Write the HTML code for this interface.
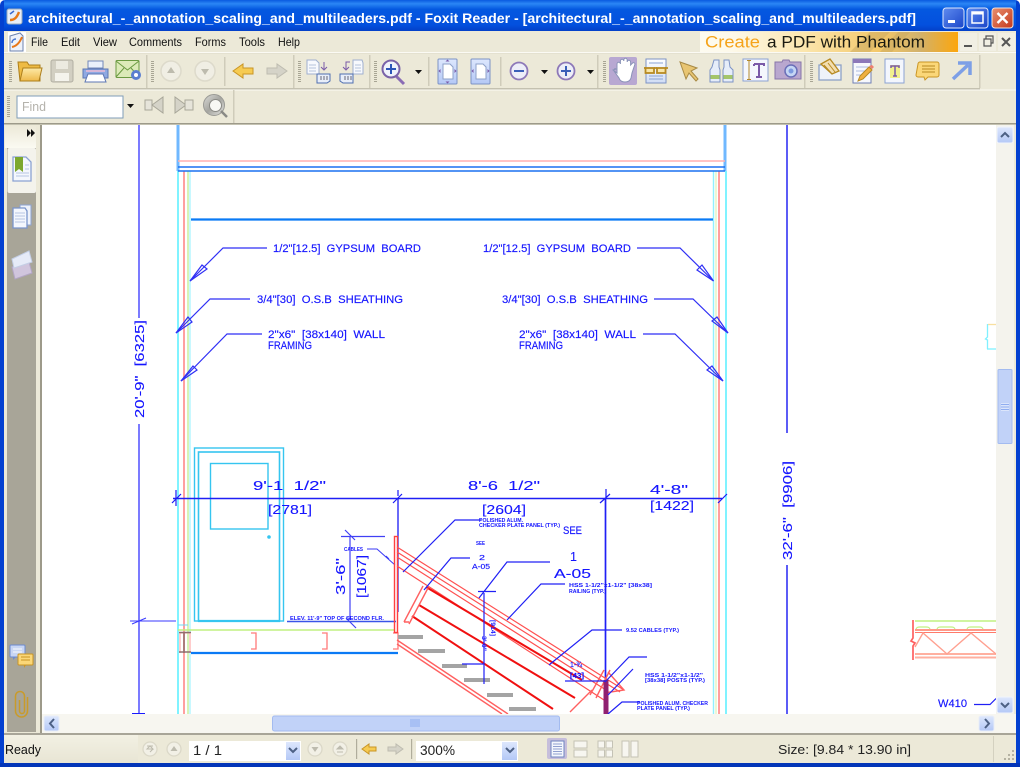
<!DOCTYPE html>
<html><head><meta charset="utf-8"><title>Foxit Reader</title>
<style>
html,body{margin:0;padding:0;background:#ece9d8;width:1020px;height:767px;overflow:hidden}
svg.root{display:block;position:absolute;left:0;top:0;filter:blur(.3px)}
text{font-family:"Liberation Sans",sans-serif}
.ui{font-size:12px;fill:#111}
.cad{fill:#1414ff;font-size:11px;stroke:#1414ff;stroke-width:.15}
.cd{fill:#1414ff;font-size:12.5px;stroke:#1414ff;stroke-width:.1}
.t{fill:#1414ff;font-size:5px;font-weight:bold}
</style></head><body>
<svg class="root" width="1020" height="767" viewBox="0 0 1020 767" xmlns="http://www.w3.org/2000/svg">
<defs>
<linearGradient id="tb" x1="0" y1="0" x2="0" y2="1"><stop offset="0" stop-color="#0a5ae0"/><stop offset=".12" stop-color="#2b86f5"/><stop offset=".3" stop-color="#0458e0"/><stop offset=".8" stop-color="#0350de"/><stop offset="1" stop-color="#0340c8"/></linearGradient>
<linearGradient id="bn" x1="0" y1="0" x2="1" y2="0"><stop offset="0" stop-color="#fdfbf0"/><stop offset=".12" stop-color="#fdf9ea"/><stop offset=".4" stop-color="#fbe6ae"/><stop offset=".7" stop-color="#f3c768"/><stop offset=".85" stop-color="#d2b26c"/><stop offset="1" stop-color="#fca60c"/></linearGradient>
<linearGradient id="min" x1="0" y1="0" x2="1" y2="1"><stop offset="0" stop-color="#5f8cf0"/><stop offset="1" stop-color="#1a45c8"/></linearGradient>
<linearGradient id="cls" x1="0" y1="0" x2="1" y2="1"><stop offset="0" stop-color="#e9906f"/><stop offset="1" stop-color="#c4381c"/></linearGradient>
<linearGradient id="bt" x1="0" y1="0" x2="0" y2="1"><stop offset="0" stop-color="#dde7fd"/><stop offset="1" stop-color="#b4c8f6"/></linearGradient>
<linearGradient id="side" x1="0" y1="0" x2="0" y2="1"><stop offset="0" stop-color="#ece9d8"/><stop offset="1" stop-color="#fbfaf2"/></linearGradient>
<linearGradient id="st" x1="0" y1="0" x2="0" y2="1"><stop offset="0" stop-color="#f2f0e3"/><stop offset="1" stop-color="#e8e5d4"/></linearGradient>
<linearGradient id="fold" x1="0" y1="0" x2="0" y2="1"><stop offset="0" stop-color="#fdeaa8"/><stop offset="1" stop-color="#eeb94a"/></linearGradient>
<linearGradient id="pg" x1="0" y1="0" x2="0" y2="1"><stop offset="0" stop-color="#fff"/><stop offset="1" stop-color="#cfdcf5"/></linearGradient>
<linearGradient id="ring" x1="0" y1="0" x2="1" y2="1"><stop offset="0" stop-color="#dcdcd8"/><stop offset=".5" stop-color="#a5a5a0"/><stop offset="1" stop-color="#e6e6e2"/></linearGradient>
</defs>

<!-- frame -->
<rect width="1020" height="767" fill="#ece9d8"/>
<rect width="1020" height="31" fill="url(#tb)"/>
<rect x="0" y="0" width="4" height="767" fill="#0340d0"/>
<rect x="1016" y="0" width="4" height="767" fill="#0340d0"/>
<rect x="0" y="763" width="1020" height="4" fill="#0335b8"/>
<path d="M0 0h5a5 5 0 0 0-5 5zM1020 0h-5a5 5 0 0 1 5 5z" fill="#fff"/>

<!-- title -->
<g><rect x="7" y="9" width="15" height="15" rx="2" fill="#e8eef8" stroke="#9ab"/><path d="M10 20c5 0 7-3 9-8" stroke="#e87a18" stroke-width="2.4" fill="none"/><path d="M10 14l4-3" stroke="#3a6bd0" stroke-width="1.5"/></g>
<text x="28" y="23" font-size="13.5" font-weight="bold" fill="#fff" textLength="888" lengthAdjust="spacingAndGlyphs">architectural_-_annotation_scaling_and_multileaders.pdf - Foxit Reader - [architectural_-_annotation_scaling_and_multileaders.pdf]</text>
<!-- window buttons -->
<rect x="943" y="8" width="21" height="20" rx="3" fill="url(#min)" stroke="#dfe8fb"/><rect x="948" y="20" width="7" height="3" fill="#fff"/>
<rect x="967" y="8" width="21" height="20" rx="3" fill="url(#min)" stroke="#dfe8fb"/><rect x="972" y="12" width="11" height="11" fill="none" stroke="#fff" stroke-width="1.5"/><rect x="972" y="12" width="11" height="2.5" fill="#fff"/>
<rect x="992" y="8" width="21" height="20" rx="3" fill="url(#cls)" stroke="#f2e3dc"/><path d="M997.500 13l10 10M1007.500 13l-10 10" stroke="#fff" stroke-width="2.400"/>

<!-- menu -->
<g><rect x="8" y="32" width="18" height="20" fill="#fff"/><path d="M10 36l10-3 3 3v15H10z" fill="#eef2fa" stroke="#6d83ad"/><path d="M12 47c5-1 8-5 10-10" stroke="#e8781a" stroke-width="2" fill="none"/><path d="M12 43c0-3 2-4 4-4" stroke="#4a78d0" stroke-width="1.400" fill="none"/></g>
<text class="ui" x="31" y="46" textLength="17" lengthAdjust="spacingAndGlyphs">File</text>
<text class="ui" x="61" y="46" textLength="19" lengthAdjust="spacingAndGlyphs">Edit</text>
<text class="ui" x="93" y="46" textLength="24" lengthAdjust="spacingAndGlyphs">View</text>
<text class="ui" x="129" y="46" textLength="53" lengthAdjust="spacingAndGlyphs">Comments</text>
<text class="ui" x="195" y="46" textLength="31" lengthAdjust="spacingAndGlyphs">Forms</text>
<text class="ui" x="239" y="46" textLength="26" lengthAdjust="spacingAndGlyphs">Tools</text>
<text class="ui" x="278" y="46" textLength="22" lengthAdjust="spacingAndGlyphs">Help</text>
<rect x="700" y="32" width="258" height="20" fill="url(#bn)"/>
<path d="M850 52l20-20h20l-20 20zM880 52l18-20h12l-18 20z" fill="#c8a860" opacity=".5"/>
<text x="705" y="47.500" font-size="16.500" fill="#f5a31a" textLength="55" lengthAdjust="spacingAndGlyphs">Create</text>
<text x="767" y="47.500" font-size="16.500" fill="#1a1a10" textLength="158" lengthAdjust="spacingAndGlyphs">a PDF with Phantom</text>
<rect x="960" y="33" width="17" height="18" fill="#f1efe4"/><rect x="964" y="45" width="8" height="2" fill="#555"/>
<rect x="979" y="33" width="17" height="18" fill="#f1efe4"/><path d="M984 39h7v7h-7zM986 39v-3h7v7h-2" fill="none" stroke="#555" stroke-width="1.200"/>
<rect x="998" y="33" width="17" height="18" fill="#f1efe4"/><path d="M1002 38l8 8M1010 38l-8 8" stroke="#555" stroke-width="2"/>
<rect x="4" y="52" width="1012" height="1" fill="#fbfaf4"/>

<!-- toolbar 1 lines -->
<rect x="4" y="53" width="976" height="1" fill="#e4e1d0"/>
<rect x="4" y="88" width="976" height="1.500" fill="#c4c1b0"/>
<rect x="4" y="89.500" width="1012" height="1" fill="#fbfaf4"/>
<g fill="#cfccba">
<rect x="146" y="55" width="1.500" height="33"/><rect x="224" y="57" width="1.500" height="29"/><rect x="293" y="55" width="1.500" height="33"/><rect x="369" y="55" width="1.500" height="33"/><rect x="428" y="57" width="1.500" height="29"/><rect x="500" y="57" width="1.500" height="29"/><rect x="597" y="55" width="1.500" height="33"/><rect x="804" y="55" width="1.500" height="33"/><rect x="979" y="55" width="1.500" height="33"/>
<rect x="233" y="90" width="1.500" height="33"/>
</g>
<!-- grippers -->
<g stroke="#a8a594" stroke-width="3" stroke-dasharray="1 1"><path d="M10.500 61v21M152.500 61v21M299.500 61v21M375.500 61v21M604.500 61v21M811.500 61v21M8.500 96v22"/></g>

<!-- folder -->
<path d="M18 62h9l2 3h11v16H20z" fill="#eebb44" stroke="#ad7f1c"/><path d="M20 81l3-13h19l-3 13z" fill="url(#fold)" stroke="#ad7f1c"/>
<!-- save -->
<rect x="51" y="60" width="22" height="22" rx="2" fill="#d2cfc2" stroke="#b2afa3"/><rect x="56" y="61" width="12" height="8" fill="#eceae0"/><rect x="55" y="73" width="14" height="8" fill="#f4f3ec"/>
<!-- print -->
<path d="M88 61h15v7H88z" fill="#eaf0fb" stroke="#7288b8"/><path d="M83 69h25v9H83z" fill="#8fa9e2" stroke="#5d76b4"/><path d="M88 74h15l3 8H85z" fill="#fff" stroke="#5d76b4"/><rect x="86" y="70" width="19" height="2" fill="#d7b7d8"/>
<!-- mail -->
<rect x="116" y="60.500" width="23" height="17" rx="1" fill="#dceab8" stroke="#6b9a42"/><path d="M116 61l11.500 9 11.500-9M116 77l8-9M139 77l-8-9" fill="none" stroke="#6b9a42"/><circle cx="136" cy="75" r="5" fill="#5b7fd0"/><circle cx="136" cy="75" r="2" fill="#fff"/>
<!-- nav circles -->
<g fill="#f0eee4" stroke="#dddacb" stroke-width="1.500"><circle cx="171" cy="71" r="10"/><circle cx="205" cy="71" r="10"/></g>
<path d="M171 67l4 6h-8z" fill="#bdbbae"/><path d="M205 75l4-6h-8z" fill="#bdbbae"/>
<path d="M233 71l10-7v4h10v6h-10v4z" fill="#f6cb52" stroke="#c99525"/>
<path d="M287 71l-10-7v4h-10v6h10v4z" fill="#d5d3c8" stroke="#bebcb0"/>
<!-- page-move -->
<path d="M307 60h9l3 3v11h-12z" fill="#f7f9fd" stroke="#9fb0cf"/><path d="M309 65h7M309 68h7M309 71h7" stroke="#b5c3dc"/><path d="M317 74h13v7l-3 2h-10z" fill="#e8eef9" stroke="#4f6fb0"/><path d="M321 76v4M324 76v4M327 76v4" stroke="#667"/><path d="M324 62v7M321 67l3 3 3-3" stroke="#7a5aa8" fill="none"/>
<path d="M353 60h9l1 3v11h-10z" fill="#f7f9fd" stroke="#9fb0cf"/><path d="M355 65h6M355 68h6M355 71h6" stroke="#b5c3dc"/><path d="M340 74h13v9h-10l-3-2z" fill="#e8eef9" stroke="#4f6fb0"/><path d="M345 76v4M348 76v4M351 76v4" stroke="#667"/><path d="M350 62h-4v7M343 67l3 3 3-3" stroke="#7a5aa8" fill="none"/>
<!-- zoom -->
<path d="M396 76l8 8" stroke="#8a6cb5" stroke-width="3"/><circle cx="391" cy="69" r="8.500" fill="#f0f2fb" stroke="#7a62a8" stroke-width="2"/><path d="M386 69h10M391 64v10" stroke="#2c55b8" stroke-width="2"/>
<path d="M415 70h7l-3.500 4z" fill="#111"/>
<!-- fit page -->
<rect x="438" y="59" width="19" height="25" rx="1" fill="url(#bt)" stroke="#7d93c5"/><path d="M443 64h7l3 3v12h-10z" fill="#fff" stroke="#8ea1c8"/><path d="M447.500 59.500l-2 2h4zM447.500 83.500l-2-2h4zM438.500 71l2-2v4zM456.500 71l-2-2v4z" fill="#7a5aa8"/>
<rect x="471" y="59" width="19" height="25" rx="1" fill="url(#bt)" stroke="#7d93c5"/><path d="M476 64h7l3 3v12h-10z" fill="#fff" stroke="#8ea1c8"/><path d="M471.500 71l2-2v4zM489.500 71l-2-2v4z" fill="#7a5aa8"/>
<!-- +- -->
<circle cx="519" cy="71" r="8.500" fill="#edeef8" stroke="#8d78b8" stroke-width="1.800"/><path d="M514 71h10" stroke="#3a5fb8" stroke-width="2"/>
<path d="M541 70h7l-3.500 4z" fill="#111"/>
<circle cx="566" cy="71" r="8.500" fill="#edeef8" stroke="#8d78b8" stroke-width="1.800"/><path d="M561 71h10M566 66v10" stroke="#3a5fb8" stroke-width="2"/>
<path d="M587 70h7l-3.500 4z" fill="#111"/>
<!-- hand -->
<rect x="609" y="57" width="28" height="28" rx="2" fill="#b8a8d2"/>
<path d="M613 70l4 3v-9a1.700 1.700 0 0 1 3.400 0v-3a1.700 1.700 0 0 1 3.400 0v-1a1.700 1.700 0 0 1 3.400 0v2a1.700 1.700 0 0 1 3.400 0v3l2-2a1.500 1.500 0 0 1 2.400 1l-3 9-1 5c-1 3-3 4-6 4-3 0-5-1-6-4l-5-7c-.8-1.500 1-3 2-2z" fill="#fff" stroke="#8b93b8"/>
<!-- glasses page -->
<rect x="646" y="59" width="20" height="24" fill="url(#pg)" stroke="#7d93c5"/><path d="M649 76h14M649 79h14M649 63h14" stroke="#8aa3d4"/><rect x="645.500" y="68" width="8.500" height="5" fill="#f8e6a8" stroke="#b78a22" stroke-width="1.800"/><rect x="657" y="68" width="8.500" height="5" fill="#f8e6a8" stroke="#b78a22" stroke-width="1.800"/><path d="M644 68h2M654 68h3M665 68h3" stroke="#b78a22" stroke-width="1.800"/>
<!-- arrow -->
<path d="M680 62l6 17 3-6 7 8 2-2-7-8 6-3z" fill="#e8c572" stroke="#a88a45"/>
<!-- binoculars -->
<path d="M714 60h5v7l1 3v12h-10V70l2-3z" fill="#e6edf9" stroke="#7d93c5"/><path d="M724 60h5l1 7 3 3v12h-10V70l1-3z" fill="#e6edf9" stroke="#7d93c5"/><rect x="710.500" y="75" width="9" height="4" fill="#a4c56a"/><rect x="723.500" y="75" width="9" height="4" fill="#a4c56a"/>
<!-- IT -->
<rect x="743" y="59" width="25" height="22" fill="#f4f7fd" stroke="#8ba2d2"/><path d="M749 61v18M747 60.500h4M747 79.500h4" stroke="#b48a2c"/><path d="M754 64h10v2M759 64v13M756 77h6M754 66v-2" stroke="#7a5aa8" stroke-width="2" fill="none"/>
<!-- camera -->
<path d="M775 62h7l1-2h6l1 2h11v17h-26z" fill="#b9a7cf" stroke="#8875a8"/><circle cx="791" cy="71" r="6" fill="#c5d6f4" stroke="#6a6fb8" stroke-width="1.500"/><circle cx="791" cy="71" r="2.500" fill="#7d9ae0"/>
<!-- note icons -->
<rect x="819" y="65" width="22" height="15" fill="#eef2f9" stroke="#8da2c6" stroke-width="1.300"/><path d="M821 64l9-5 9 12-7 3z" fill="#f3deb0" stroke="#b78a22" stroke-width="1.300"/><path d="M824 65l8 9M828 63l7 9" stroke="#b78a22"/>
<rect x="853" y="59" width="18" height="24" fill="#f7f8fc" stroke="#6f7fb5"/><rect x="853" y="59" width="18" height="4" fill="#8d78b8"/><path d="M856 67h12M856 71h10M856 75h8" stroke="#aebde0"/><path d="M858 81l2-5 9-9 3 3-9 9z" fill="#f0b040" stroke="#b78a22"/><path d="M869 66l3 3 2-2-2-2z" fill="#ef7f70"/>
<rect x="885" y="59" width="19" height="24" fill="#f3f6fd" stroke="#8ba2d2"/><rect x="890" y="65" width="10" height="13" fill="#f2f08e"/><path d="M891 68v-2h8v2M895 66v10M893 76h4" stroke="#7a5aa8" stroke-width="1.500" fill="none"/>
<path d="M918 64a2 2 0 0 1 2-2h17a2 2 0 0 1 2 2v11a2 2 0 0 1-2 2h-9l-3 3-1-3h-6a2 2 0 0 1-2-2z" fill="#fbd778" stroke="#c99525"/><path d="M922 66h13M922 69h13M922 72h13" stroke="#b78a22"/>
<path d="M953 79l15-14M958 63h12v12" fill="none" stroke="#7d9fe6" stroke-width="3.500"/>

<!-- toolbar 2 -->
<rect x="4" y="123" width="1012" height="1.500" fill="#9d9a8a"/>
<rect x="17" y="96" width="106" height="22" fill="#fff" stroke="#7f9db9"/>
<text x="22" y="111" font-size="12.500" fill="#b5b3ac" textLength="24" lengthAdjust="spacingAndGlyphs">Find</text>
<path d="M127 104h7l-3.500 4z" fill="#111"/>
<path d="M145 100h7v10h-7z" fill="#e6e4da" stroke="#a8a699"/><path d="M152 105l11-8v16z" fill="#d5d3c8" stroke="#a8a699"/>
<path d="M186 105l-11-8v16z" fill="#d5d3c8" stroke="#a8a699"/><path d="M185 100h8v10h-8z" fill="#e6e4da" stroke="#a8a699"/>
<circle cx="214" cy="105" r="10.500" fill="url(#ring)" stroke="#9a9a95"/><circle cx="215.500" cy="105.500" r="6" fill="#f8f8f4" stroke="#8a8a85"/><path d="M221 111l6 6" stroke="#8a8a85" stroke-width="2.500"/>

<!-- side panel -->
<rect x="4" y="124.500" width="38" height="610" fill="#ece9d8"/>
<rect x="5" y="125" width="31" height="23" fill="url(#side)"/>
<rect x="7" y="148" width="29" height="584" fill="#a8a598"/>
<rect x="7.500" y="148" width="28.500" height="45" rx="2" fill="#f4f3ec"/>
<rect x="40" y="125" width="2" height="609" fill="#9d9a8a"/>
<path d="M27 129l4 4-4 4zM31 129l4 4-4 4z" fill="#111"/>
<!-- bookmark -->
<path d="M13 157h13l5 5v19H13z" fill="#f4f7fd" stroke="#8ba2d2" stroke-width="1.300"/><path d="M15 157h8v15l-4-3-4 3z" fill="#7da82e"/><path d="M16 173h13M16 176h13M25 165h4M25 169h4" stroke="#b6c6e4"/>
<!-- pages -->
<path d="M20 205h11v20H20z" fill="#eef2fa" stroke="#8ba2d2"/><path d="M13 208h12l2 3v17H13z" fill="#f4f7fd" stroke="#7a95cc" stroke-width="1.300"/><path d="M15 213h10M15 216h10M15 219h10M15 222h10" stroke="#b6c6e4"/>
<!-- layers -->
<path d="M12 267l17-5 3 11-17 6z" fill="#d0c5dd" stroke="#b3a6c6"/><path d="M12 259l17-8 3 11-18 6z" fill="#e6ebf8" stroke="#c4cfe6"/>
<!-- comments -->
<rect x="10" y="645" width="15" height="12" rx="1" fill="#c8d6f4" stroke="#6c8bd0"/><path d="M13 657v3l3-3z" fill="#6c8bd0"/><path d="M13 649h9M13 652h9" stroke="#f7f9fd"/>
<rect x="18" y="654" width="15" height="11" rx="1" fill="#fbd778" stroke="#c99525"/><path d="M24 665v3l2-3z" fill="#c99525"/><path d="M21 657h9M21 660h9" stroke="#c99525"/>
<!-- clip -->
<path d="M27.500 697v14a6 6 0 0 1-12 0v-15a4.500 4.500 0 0 1 9 0v15a2.500 2.500 0 0 1-5 0v-11" fill="none" stroke="#c99b2a" stroke-width="1.500"/>

<!-- page -->
<rect x="42" y="125" width="954" height="589" fill="#fff"/>
<svg x="42" y="125" width="954" height="589" viewBox="42 125 954 589">
<g fill="none">
<!-- far left dim -->
<path d="M139 125v193M139 424v295" stroke="#5a5aff" stroke-width="1.600"/>
<path d="M130 621h46M132 624l14-6" stroke="#3a3aff"/>
<path d="M132 714h13" stroke="#1a1aff" stroke-width="2"/>
<!-- left wall -->
<path d="M178 125v46" stroke="#70b8ff" stroke-width="3"/>
<path d="M178 171v543" stroke="#60f0ff" stroke-width="1.600"/>
<path d="M184 171v543" stroke="#ffa0a0" stroke-width="2"/>
<path d="M188 171v543" stroke="#c8f098" stroke-width="1.400"/>
<path d="M190 171v543" stroke="#90f0ff" stroke-width="1"/>
<path d="M725 125v46" stroke="#70b8ff" stroke-width="3"/>
<path d="M713.500 171v543" stroke="#90f0ff" stroke-width="1.400"/>
<path d="M716 171v543" stroke="#d8f0a8" stroke-width="1"/>
<path d="M719 171v543" stroke="#ffa0a0" stroke-width="2"/>
<path d="M726 171v543" stroke="#60f0ff" stroke-width="1.600"/>
<path d="M178 161h547" stroke="#ffb0b0" stroke-width="1.400"/>
<path d="M178 167h547M178 171h547" stroke="#1a70f0" stroke-width="1.400"/>
<path d="M191 219.500h522" stroke="#0a7af5" stroke-width="2.200"/>

<!-- leaders -->
<g stroke="#2f2ff5" stroke-width="1.200">
<path d="M267 248h-44l-33 33M250 299h-40l-34 34M262 334h-35l-46 47"/>
<path d="M637 248h43l33.500 33M654 299h39l35 34M643 334h32l48 47"/>
<path d="M190 281l12-16 5 4zM176 333l12-16 4 5zM181 381l12-15 4 4z"/>
<path d="M713.500 281l-16.500-11 5-5zM728 333l-16-12 5-4zM723 381l-16-11 5-4z"/>
</g>

<!-- right dim -->
<path d="M787 125v308M787 565v149" stroke="#4a4af5" stroke-width="1.800"/>

<!-- door -->
<g stroke="#35c5f0">
<rect x="194.500" y="448" width="89" height="173" stroke-width="1.400"/>
<rect x="198.500" y="452" width="81" height="169" stroke-width="1.600"/>
<rect x="210.500" y="463.500" width="57.500" height="65.500" stroke-width="1.400"/>
<path d="M198 621h82" stroke-width="2.200"/>
</g>
<circle cx="269" cy="537" r="1.800" fill="#35c5f0"/>

<!-- horizontal dim -->
<path d="M173 498.500h549" stroke="#1f1ff5" stroke-width="1.400"/>
<path d="M176 490v16M172 503l9-9M398 490v6M393 503l9-9M606 489v9M600 503l10-9M718 503l9-9" stroke="#1a1af5" stroke-width="1.200"/>
<path d="M398 498v114" stroke="#1a1af5" stroke-width="1.300"/>
<path d="M605.500 498v216" stroke="#1f1ff5" stroke-width="1.700"/>

<!-- floor -->
<path d="M178 630h216" stroke="#c0f080" stroke-width="1.400"/>
<path d="M178 625h10" stroke="#70d8f0" stroke-width="1"/>
<path d="M287 621.500h109" stroke="#3a55e8" stroke-width="1.500"/>
<path d="M191 653h207" stroke="#0a7af5" stroke-width="2.200"/>
<path d="M180 633h10v20M180 633v20" stroke="#ff9a9a" stroke-width="1"/>
<path d="M179 632.500h12M179 652h12" stroke="#907070" stroke-width="1.500"/>
<path d="M184 632v21" stroke="#907070" stroke-width="1.500"/>
<path d="M251 633h5v16h-5M322 633h5v16h-5M393 633h5v16h-5" stroke="#ff7a7a" stroke-width="1.300"/>

<!-- 3-6 dim -->
<path d="M350 536v84M341 536.500h44M345 530l10 10M346 618l10 10" stroke="#4040f5" stroke-width="1.200"/>
<path d="M367 549h10l18 16M386 556l3 3" stroke="#3a3af5"/>
<!-- stair column -->
<rect x="394.500" y="536.500" width="3" height="96" stroke="#ff4040" stroke-width="1.400"/>

<!-- stair -->
<g stroke="#ff5050" stroke-width="1.200">
<path d="M397 547L624 690M397 552L620 692"/>
<path d="M397 557L606 690M397 566L604 700"/>
</g>
<g stroke="#f01010" stroke-width="2">
<path d="M426 587L582 680M419 605L575 698M412 616L553 709"/>
</g>
<g stroke="#ff6060" stroke-width="1.400">
<path d="M397 640L508 714M397 644L502 714"/>
<path d="M423 586L404 622M428 588L409 624M404 622h5"/>
<path d="M590 695l14-25M596 698l14-28M570 712l22-22"/>
<path d="M608 672L624 690L604 693"/>
</g>
<path d="M606 680v34" stroke="#902070" stroke-width="5"/>
<g stroke="#a4a4a4" stroke-width="4">
<path d="M398 637h25M418 651h27M442 666h25M464 680h26M487 695h26M509 709h27"/>
</g>
<g stroke="#2020f5" stroke-width="1.200">
<path d="M403 572l52-52h26"/>
<path d="M424 590l27-32h19"/>
<path d="M478 591.500h18M479 598l28-36h43"/>
<path d="M484 593v91M462 664h22"/>
<path d="M507 620l34-36h24"/>
<path d="M549 665l43-35h30"/>
<path d="M565 681h40M608 695l25-26"/>
<path d="M605 682l24-25h18"/>
<path d="M608 714l14-12h18"/>
</g>

<!-- right truss -->
<path d="M913 620v18l-2 3 4 2-2 3v14" stroke="#ff6060" stroke-width="1.700"/>
<path d="M915 621h81" stroke="#c0f080" stroke-width="1.400"/>
<path d="M916 629c1-2 2-2 4-2h6c2 0 3 0 4 2M937 629c1-2 2-2 4-2h10c2 0 3 0 4 2M967 629c1-2 2-2 4-2h8c2 0 3 0 4 2" stroke="#c0f080" stroke-width="1.200"/>
<path d="M915 630h81" stroke="#ff9a8a" stroke-width="2"/>
<path d="M915 632.500h81" stroke="#ff7a6a" stroke-width="1"/>
<path d="M915 654h81M915 657.500h81" stroke="#ffb0a0" stroke-width="2"/>
<path d="M915 647l8-14 24 21 24-21 25 21" stroke="#ffa090" stroke-width="1.400"/>

<!-- W410 -->
<path d="M974 704.500h16l6-6" stroke="#2020f5" stroke-width="1.200"/>
<!-- cyan mark -->
<path d="M987.500 349v-9l-2-1 2-2v-13" stroke="#80f0ff" stroke-width="1.300"/>
<path d="M987 349h9" stroke="#80f0ff" stroke-width="1.300"/>
<path d="M988 324.500h8" stroke="#f8e0a0" stroke-width="1.300"/>
</g>

<!-- CAD text -->
<text class="cad" x="273" y="252" textLength="148" lengthAdjust="spacingAndGlyphs">1/2"[12.5]&#160;&#160;GYPSUM&#160;&#160;BOARD</text>
<text class="cad" x="483" y="252" textLength="148" lengthAdjust="spacingAndGlyphs">1/2"[12.5]&#160;&#160;GYPSUM&#160;&#160;BOARD</text>
<text class="cad" x="257" y="303" textLength="146" lengthAdjust="spacingAndGlyphs">3/4"[30]&#160;&#160;O.S.B&#160;&#160;SHEATHING</text>
<text class="cad" x="502" y="303" textLength="146" lengthAdjust="spacingAndGlyphs">3/4"[30]&#160;&#160;O.S.B&#160;&#160;SHEATHING</text>
<text class="cad" x="268" y="338" textLength="117" lengthAdjust="spacingAndGlyphs">2"x6"&#160;&#160;[38x140]&#160;&#160;WALL</text>
<text class="cad" x="268" y="349" textLength="44" lengthAdjust="spacingAndGlyphs">FRAMING</text>
<text class="cad" x="519" y="338" textLength="117" lengthAdjust="spacingAndGlyphs">2"x6"&#160;&#160;[38x140]&#160;&#160;WALL</text>
<text class="cad" x="519" y="349" textLength="44" lengthAdjust="spacingAndGlyphs">FRAMING</text>
<text class="cd" x="253" y="490" textLength="73" lengthAdjust="spacingAndGlyphs">9'-1&#160;&#160;1/2"</text>
<text class="cd" x="268" y="514" textLength="44" lengthAdjust="spacingAndGlyphs">[2781]</text>
<text class="cd" x="468" y="490" textLength="72" lengthAdjust="spacingAndGlyphs">8'-6&#160;&#160;1/2"</text>
<text class="cd" x="482" y="514" textLength="44" lengthAdjust="spacingAndGlyphs">[2604]</text>
<text class="cd" x="650" y="494" textLength="38" lengthAdjust="spacingAndGlyphs">4'-8"</text>
<text class="cd" x="650" y="510" textLength="44" lengthAdjust="spacingAndGlyphs">[1422]</text>
<text class="cd" transform="translate(144 418) rotate(-90)" textLength="98" lengthAdjust="spacingAndGlyphs">20'-9"&#160;&#160;[6325]</text>
<text class="cd" transform="translate(792 560) rotate(-90)" textLength="99" lengthAdjust="spacingAndGlyphs">32'-6"&#160;&#160;[9906]</text>
<text class="cd" transform="translate(345 595) rotate(-90)" textLength="37" lengthAdjust="spacingAndGlyphs">3'-6"</text>
<text class="cd" transform="translate(366 598) rotate(-90)" textLength="43" lengthAdjust="spacingAndGlyphs">[1067]</text>
<text class="cad" x="563" y="534" textLength="19" lengthAdjust="spacingAndGlyphs">SEE</text>
<text class="cd" x="570" y="561" textLength="7" lengthAdjust="spacingAndGlyphs">1</text>
<text class="cd" x="554" y="578" textLength="37" lengthAdjust="spacingAndGlyphs">A-05</text>
<text class="t" x="290" y="620" textLength="94" lengthAdjust="spacingAndGlyphs">ELEV. 11'-9" TOP OF SECOND FLR.</text>
<text class="t" x="344" y="551" textLength="19" lengthAdjust="spacingAndGlyphs">CABLES</text>
<text class="t" x="479" y="522" textLength="44" lengthAdjust="spacingAndGlyphs">POLISHED ALUM.</text>
<text class="t" x="479" y="527" textLength="81" lengthAdjust="spacingAndGlyphs">CHECKER PLATE PANEL (TYP.)</text>
<text class="t" x="476" y="545" textLength="9" lengthAdjust="spacingAndGlyphs">SEE</text>
<text class="cad" x="479" y="560" textLength="6" lengthAdjust="spacingAndGlyphs" style="font-size:7px">2</text>
<text class="cad" x="472" y="569" textLength="18" lengthAdjust="spacingAndGlyphs" style="font-size:7px">A-05</text>
<text class="t" x="569" y="587" textLength="83" lengthAdjust="spacingAndGlyphs">HSS 1-1/2"x1-1/2" [38x38]</text>
<text class="t" x="569" y="593" textLength="37" lengthAdjust="spacingAndGlyphs">RAILING (TYP.)</text>
<text class="t" x="626" y="632" textLength="53" lengthAdjust="spacingAndGlyphs">9.52 CABLES (TYP.)</text>
<text class="t" x="645" y="677" textLength="58" lengthAdjust="spacingAndGlyphs">HSS 1-1/2"x1-1/2"</text>
<text class="t" x="645" y="682" textLength="60" lengthAdjust="spacingAndGlyphs">[38x38] POSTS (TYP.)</text>
<text class="t" x="637" y="705" textLength="71" lengthAdjust="spacingAndGlyphs">POLISHED ALUM. CHECKER</text>
<text class="t" x="637" y="710" textLength="53" lengthAdjust="spacingAndGlyphs">PLATE PANEL (TYP.)</text>
<text class="cad" x="570" y="667" style="font-size:7px" textLength="12" lengthAdjust="spacingAndGlyphs">1-¾</text>
<text class="cad" x="570" y="678" style="font-size:7px;font-weight:bold" textLength="14" lengthAdjust="spacingAndGlyphs">[43]</text>
<text transform="translate(482 636) rotate(90)" style="font-size:6px;fill:#1a1aff;font-weight:bold" textLength="15" lengthAdjust="spacingAndGlyphs">3'-0"</text>
<text transform="translate(491 620) rotate(90)" style="font-size:6px;fill:#1a1aff;font-weight:bold" textLength="16" lengthAdjust="spacingAndGlyphs">[914]</text>
<text class="cad" x="938" y="707" textLength="29" lengthAdjust="spacingAndGlyphs">W410</text>
</svg>

<!-- v scrollbar -->
<rect x="996" y="125" width="20" height="589" fill="#f4f3ed"/>
<rect x="1014" y="125" width="2" height="610" fill="#ece9d8"/>
<rect x="997" y="127" width="16" height="16" rx="2" fill="url(#bt)" stroke="#f1f4fc"/><path d="M1001 137l4-4 4 4" fill="none" stroke="#4d6185" stroke-width="2"/>
<rect x="998" y="369.500" width="14" height="74" rx="1" fill="#c1d2f8" stroke="#a3bbf0"/><path d="M1001 403h8v8h-8z" fill="#dbe5fb"/><path d="M1001 404.500h8M1001 407h8M1001 409.500h8" stroke="#8fadf0"/>
<rect x="997" y="697" width="16" height="16" rx="2" fill="url(#bt)" stroke="#f1f4fc"/><path d="M1001 703l4 4 4-4" fill="none" stroke="#4d6185" stroke-width="2"/>

<!-- h scrollbar -->
<rect x="42" y="714" width="974" height="20" fill="#f7f6f0"/>
<rect x="44" y="716" width="15" height="15" rx="2" fill="url(#bt)" stroke="#e8edf8"/><path d="M54 719l-4 4.500 4 4.500" fill="none" stroke="#4d6185" stroke-width="2"/>
<rect x="272.500" y="716" width="287" height="15" rx="2" fill="#c1d2f8" stroke="#a3bbf0"/><path d="M411 719v8M413 719v8M415 719v8M417 719v8M419 719v8" stroke="#8fadf0"/>
<rect x="979" y="716" width="15" height="15" rx="2" fill="url(#bt)" stroke="#e8edf8"/><path d="M985 719l4 4.500-4 4.500" fill="none" stroke="#4d6185" stroke-width="2"/>

<!-- status bar -->
<rect x="4" y="733" width="1012" height="2" fill="#a8a598"/>
<rect x="4" y="735" width="1012" height="28" fill="#ece9d8"/>
<rect x="4" y="735" width="134" height="28" fill="url(#st)"/>
<text x="5" y="754" textLength="36" lengthAdjust="spacingAndGlyphs" style="font-size:13px;fill:#111">Ready</text>
<g fill="#f2f0e6" stroke="#dbd8c8" stroke-width="1.300"><circle cx="150" cy="749" r="7"/><circle cx="174" cy="749" r="7"/><circle cx="315" cy="749" r="7"/><circle cx="340" cy="749" r="7"/></g>
<path d="M150 746l3 3h-6zM147 746h6M150 752l3-3" fill="none" stroke="#bdbbae"/>
<path d="M174 746l3.500 5h-7z" fill="#bdbbae"/><path d="M315 752l3.500-5h-7z" fill="#bdbbae"/><path d="M337 752h6M340 746l3 3h-6z" fill="#bdbbae" stroke="#bdbbae"/>
<rect x="189" y="741" width="112" height="20" fill="#fff"/>
<text x="193" y="755" font-size="13.500" fill="#222" textLength="29" lengthAdjust="spacingAndGlyphs">1 / 1</text>
<rect x="286" y="742" width="14" height="18" fill="url(#bt)"/><path d="M289 748l4 4 4-4" fill="none" stroke="#4d6185" stroke-width="2"/>
<rect x="356" y="739" width="1.200" height="20" fill="#b0ad9c"/>
<path d="M362 749l7-5v3h7v4h-7v3z" fill="#f6cb52" stroke="#c99525"/>
<path d="M403 749l-7-5v3h-8v4h8v3z" fill="#d5d3c8" stroke="#bebcb0"/>
<rect x="411" y="739" width="1.200" height="20" fill="#b0ad9c"/>
<rect x="416" y="741" width="102" height="20" fill="#fff"/>
<text x="420" y="755" font-size="13.500" fill="#222" textLength="35" lengthAdjust="spacingAndGlyphs">300%</text>
<rect x="502" y="742" width="15" height="18" fill="url(#bt)"/><path d="M506 748l4 4 4-4" fill="none" stroke="#4d6185" stroke-width="2"/>
<rect x="547" y="738" width="20" height="21" rx="2" fill="#c6bedb"/>
<rect x="551" y="741" width="13" height="16" fill="#f4f7fd" stroke="#6f84c0"/><path d="M553 744h9M553 746.500h9M553 749h9M553 751.500h9M553 754h9" stroke="#6f84c0" stroke-width=".8"/>
<g fill="#f7f6f0" stroke="#c4c2b5"><rect x="574" y="741" width="13" height="7"/><rect x="574" y="750" width="13" height="7"/><rect x="598" y="741" width="6.500" height="7"/><rect x="606" y="741" width="6.500" height="7"/><rect x="598" y="750" width="6.500" height="7"/><rect x="606" y="750" width="6.500" height="7"/><rect x="622" y="741" width="7" height="16"/><rect x="631" y="741" width="7" height="16"/></g>
<text x="778" y="754" font-size="13" fill="#222" textLength="133" lengthAdjust="spacingAndGlyphs">Size: [9.84 * 13.90 in]</text>
<rect x="993" y="736" width="1" height="26" fill="#d4d1c0"/>
<g fill="#b5b2a2"><rect x="1012" y="750" width="2" height="2"/><rect x="1008" y="754" width="2" height="2"/><rect x="1012" y="754" width="2" height="2"/><rect x="1004" y="758" width="2" height="2"/><rect x="1008" y="758" width="2" height="2"/><rect x="1012" y="758" width="2" height="2"/></g>
</svg>
</body></html>
